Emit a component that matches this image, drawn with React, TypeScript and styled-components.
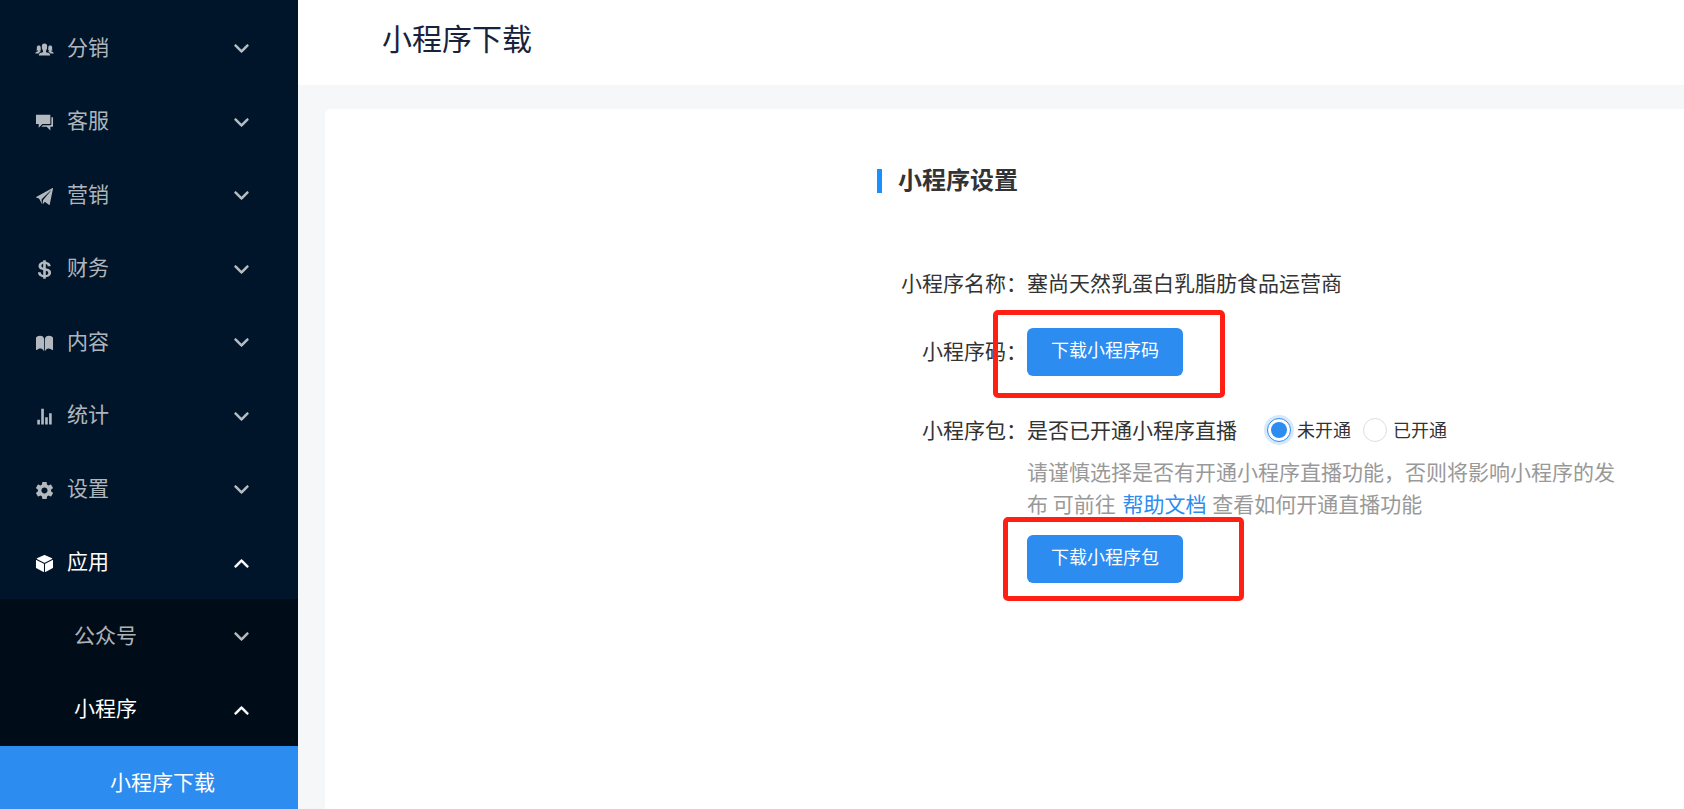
import React, { useState } from "react";
import styled, { createGlobalStyle, css } from "styled-components";
import type { IconType } from "react-icons";
import {
  IoIosArrowDown,
  IoIosArrowUp,
  IoIosBook,
  IoIosCube,
  IoIosPaperPlane,
  IoIosPeople,
  IoLogoUsd,
  IoMdChatboxes,
  IoMdSettings,
  IoMdStats,
} from "react-icons/io";

const GlobalStyle = createGlobalStyle`
  *, *::before, *::after { box-sizing: border-box; }
  body { margin: 0; }
  body, button, input {
    font-family: "Noto Sans CJK SC", sans-serif;
    font-weight: 400;
  }
`;

const Shell = styled.div`
  display: flex;
  height: 100vh;
  overflow: hidden;
  background: #f5f7f9;
  color: #333;
  font-size: 21px;
  line-height: 32px;
`;

const Sidebar = styled.nav`
  flex: 0 0 298px;
  padding-top: 11px;
  background: #001529;
  overflow: hidden;
`;

const MenuList = styled.ul<{ $nested?: boolean }>`
  margin: 0;
  padding: 0;
  list-style: none;
  background: ${(p) => (p.$nested ? "#000c17" : "transparent")};
`;

const entry = css`
  display: flex;
  align-items: center;
  width: 100%;
  height: 73px;
  border: 0;
  font-size: 21px;
  line-height: 32px;
  text-align: left;
  cursor: pointer;
`;

const MenuButton = styled.button<{ $open: boolean; $nested?: boolean }>`
  ${entry}
  padding: 0 46px 0 ${(p) => (p.$nested ? 74 : 34)}px;
  background: transparent;
  color: ${(p) => (p.$open ? "#fff" : "rgba(255, 255, 255, 0.7)")};
  gap: 12px;

  li:nth-child(even) > & {
    height: 74px;
  }
`;

const MenuLink = styled.a`
  ${entry}
  padding: 0 0 4px 110px;
  background: #2d8cf0;
  color: #fff;
  text-decoration: none;
`;

const MenuIcon = styled.span`
  display: flex;
  padding-top: 3px;
`;

const Chevron = styled.span`
  display: flex;
  padding-top: 2px;

  svg {
    stroke: currentColor;
    stroke-width: 14px;
  }
`;

const MenuText = styled.span`
  flex: 1;
  padding-bottom: 4px;
`;

const Page = styled.div`
  flex: 1;
  min-width: 0;
  display: flex;
  flex-direction: column;
`;

const PageHeader = styled.header`
  padding: 15px 84px 26px;
  background: #fff;
`;

const PageTitle = styled.h1`
  margin: 0;
  color: #17233d;
  font-size: 30px;
  font-weight: 400;
  line-height: 44px;
`;

const Card = styled.main`
  flex: 1;
  margin: 24px 0 0 27px;
  padding: 54px 68px 54px 24px;
  border-radius: 6px 0 0 0;
  background: #fff;
`;

const Settings = styled.form`
  max-width: 739px;
  margin-left: auto;
`;

const SectionTitle = styled.h2`
  display: flex;
  align-items: center;
  gap: 16px;
  margin: 0 0 71px;
  font-size: 24px;
  font-weight: 700;
  line-height: 32px;

  &::before {
    content: "";
    width: 5px;
    height: 24px;
    margin-top: 4px;
    background: #1890ff;
  }
`;

const Field = styled.div<{ $gap?: number }>`
  display: grid;
  grid-template-columns: 150px 1fr;
  margin-bottom: ${(p) => p.$gap ?? 0}px;
`;

const FieldLabel = styled.div<{ $tall?: boolean }>`
  text-align: right;
  line-height: ${(p) => (p.$tall ? 44 : 32)}px;
`;

const FieldBody = styled.div``;

const ActionWrap = styled.div`
  position: relative;
  width: max-content;
`;

const Action = styled.button`
  display: block;
  height: 48px;
  padding: 0 24px 6px;
  border: 0;
  border-radius: 6px;
  background: #2d8cf0;
  color: #fff;
  font-size: 18px;
  line-height: 32px;
  cursor: pointer;
`;

const Highlight = styled.span<{ $inset: string }>`
  position: absolute;
  inset: ${(p) => p.$inset};
  border: 5px solid #ff2013;
  border-radius: 5px;
  pointer-events: none;
`;

const RadioRow = styled.fieldset`
  display: flex;
  align-items: center;
  gap: 12px;
  margin: 0;
  padding: 0;
  border: 0;
`;

const Question = styled.span`
  margin-right: 18px;
  padding-bottom: 2px;
`;

const RadioLabel = styled.label`
  display: flex;
  align-items: center;
  gap: 6px;
  font-size: 18px;
  cursor: pointer;
`;

const RadioText = styled.span`
  padding-bottom: 2px;
`;

const Radio = styled.input`
  appearance: none;
  display: grid;
  place-items: center;
  width: 24px;
  height: 24px;
  margin: 0;
  border: 1px solid #dcdee2;
  border-radius: 50%;
  background: #fff;

  &:checked {
    border-color: #2d8cf0;
    box-shadow: 0 0 0 3px rgba(45, 140, 240, 0.2);
  }

  &:checked::before {
    content: "";
    width: 16px;
    height: 16px;
    border-radius: 50%;
    background: #2d8cf0;
  }
`;

const Hint = styled.p`
  margin: 8px 0 16px;
  color: #999;
`;

const HelpLink = styled.a`
  margin: 0 1px 0 2px;
  color: #2d8cf0;
  text-decoration: none;
`;

const sections: { name: string; icon: IconType }[] = [
  { name: "分销", icon: IoIosPeople },
  { name: "客服", icon: IoMdChatboxes },
  { name: "营销", icon: IoIosPaperPlane },
  { name: "财务", icon: IoLogoUsd },
  { name: "内容", icon: IoIosBook },
  { name: "统计", icon: IoMdStats },
  { name: "设置", icon: IoMdSettings },
  { name: "应用", icon: IoIosCube },
];

const liveOptions = ["未开通", "已开通"];

interface EntryProps {
  name: string;
  icon?: IconType;
  open: boolean;
  onToggle: () => void;
}

function MenuEntry({ name, icon: Icon, open, onToggle }: EntryProps) {
  return (
    <MenuButton type="button" $open={open} $nested={!Icon} aria-expanded={open} onClick={onToggle}>
      {Icon && (
        <MenuIcon>
          <Icon size={21} />
        </MenuIcon>
      )}
      <MenuText>{name}</MenuText>
      <Chevron>{open ? <IoIosArrowUp size={21} /> : <IoIosArrowDown size={21} />}</Chevron>
    </MenuButton>
  );
}

export default function App() {
  const [open, setOpen] = useState<string[]>(["应用", "小程序"]);
  const [live, setLive] = useState("未开通");

  const toggle = (name: string) =>
    setOpen((list) => (list.includes(name) ? list.filter((n) => n !== name) : [...list, name]));

  return (
    <>
      <GlobalStyle />
      <Shell>
        <Sidebar>
          <MenuList>
            {sections.map(({ name, icon }) => (
              <li key={name}>
                <MenuEntry name={name} icon={icon} open={open.includes(name)} onToggle={() => toggle(name)} />
                {name === "应用" && open.includes(name) && (
                  <MenuList $nested>
                    <li>
                      <MenuEntry name="公众号" open={open.includes("公众号")} onToggle={() => toggle("公众号")} />
                    </li>
                    <li>
                      <MenuEntry name="小程序" open={open.includes("小程序")} onToggle={() => toggle("小程序")} />
                      {open.includes("小程序") && (
                        <MenuLink href="#download" aria-current="page">
                          小程序下载
                        </MenuLink>
                      )}
                    </li>
                  </MenuList>
                )}
              </li>
            ))}
          </MenuList>
        </Sidebar>
        <Page>
          <PageHeader>
            <PageTitle>小程序下载</PageTitle>
          </PageHeader>
          <Card>
            <Settings>
              <SectionTitle>小程序设置</SectionTitle>
              <Field $gap={30}>
                <FieldLabel>小程序名称：</FieldLabel>
                <FieldBody>塞尚天然乳蛋白乳脂肪食品运营商</FieldBody>
              </Field>
              <Field $gap={37}>
                <FieldLabel $tall>小程序码：</FieldLabel>
                <ActionWrap>
                  <Action type="button">下载小程序码</Action>
                  <Highlight $inset="-18px -42px -22px -34px" />
                </ActionWrap>
              </Field>
              <Field>
                <FieldLabel>小程序包：</FieldLabel>
                <FieldBody>
                  <RadioRow aria-label="是否已开通小程序直播">
                    <Question>是否已开通小程序直播</Question>
                    {liveOptions.map((option) => (
                      <RadioLabel key={option}>
                        <Radio
                          type="radio"
                          name="live"
                          value={option}
                          checked={live === option}
                          onChange={() => setLive(option)}
                        />
                        <RadioText>{option}</RadioText>
                      </RadioLabel>
                    ))}
                  </RadioRow>
                  <Hint>
                    请谨慎选择是否有开通小程序直播功能，否则将影响小程序的发布 可前往{" "}
                    <HelpLink href="#help">帮助文档</HelpLink> 查看如何开通直播功能
                  </Hint>
                  <ActionWrap>
                    <Action type="button">下载小程序包</Action>
                    <Highlight $inset="-18px -61px -18px -24px" />
                  </ActionWrap>
                </FieldBody>
              </Field>
            </Settings>
          </Card>
        </Page>
      </Shell>
    </>
  );
}
